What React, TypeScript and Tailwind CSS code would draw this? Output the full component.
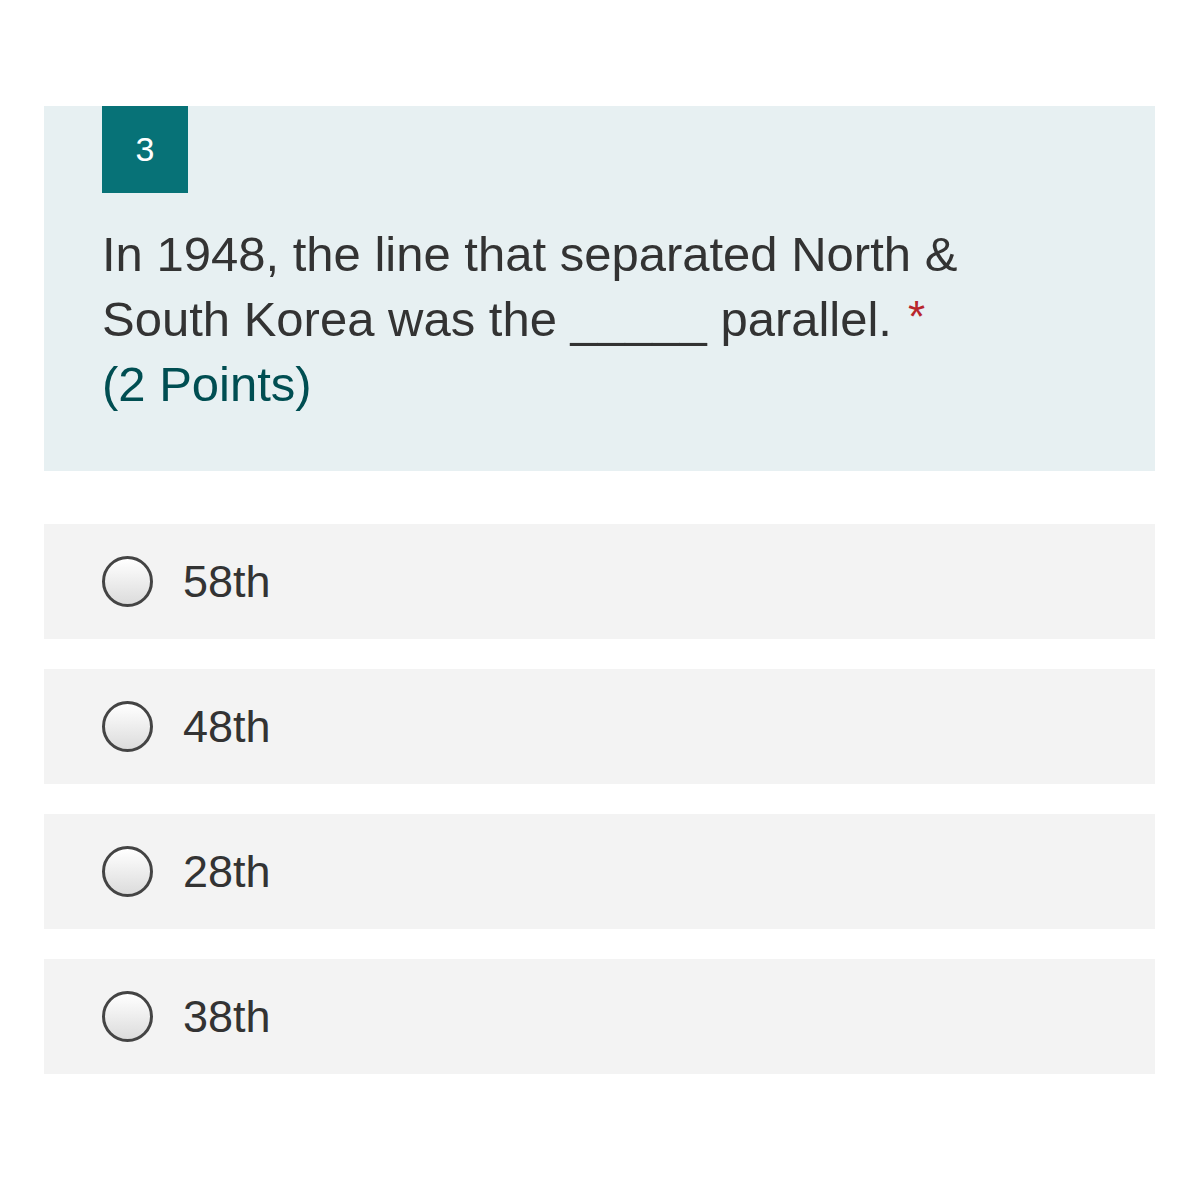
export default function App() {
    const options = ['58th', '48th', '28th', '38th'];

    return (
        <div className="min-h-[1200px] bg-white pt-[106px] pl-[44px] pr-[45px] font-['Liberation_Sans',Arial,sans-serif]">
            {/* Question card */}
            <div className="bg-[#e7f0f2] pl-[58px] pr-[40px] pb-[54px]">
                <div className="w-[86px] h-[87px] bg-[#077277] flex items-center justify-center text-white text-[34px]">
                    3
                </div>
                <div className="mt-[29px] text-[49px] leading-[65px] text-[#333333]">
                    <div>In 1948, the line that separated North &amp;</div>
                    <div>
                        South Korea was the _____ parallel.
                        <span className="text-[#b8262c] text-[44px] align-top ml-[16px] relative top-[-3px]">*</span>
                    </div>
                    <div className="text-[#004e52]">(2 Points)</div>
                </div>
            </div>

            {/* Options */}
            <div className="mt-[53px] flex flex-col gap-[30px]">
                {options.map((opt) => (
                    <div key={opt} className="bg-[#f3f3f3] h-[115px] px-[58px] flex items-center gap-[30px]">
                        <div className="w-[51px] h-[51px] rounded-full border-[3px] border-[#444444] bg-gradient-to-b from-white to-[#dcdcdc] shrink-0" />
                        <span className="text-[45px] text-[#333333] leading-none">{opt}</span>
                    </div>
                ))}
            </div>
        </div>
    );
}
